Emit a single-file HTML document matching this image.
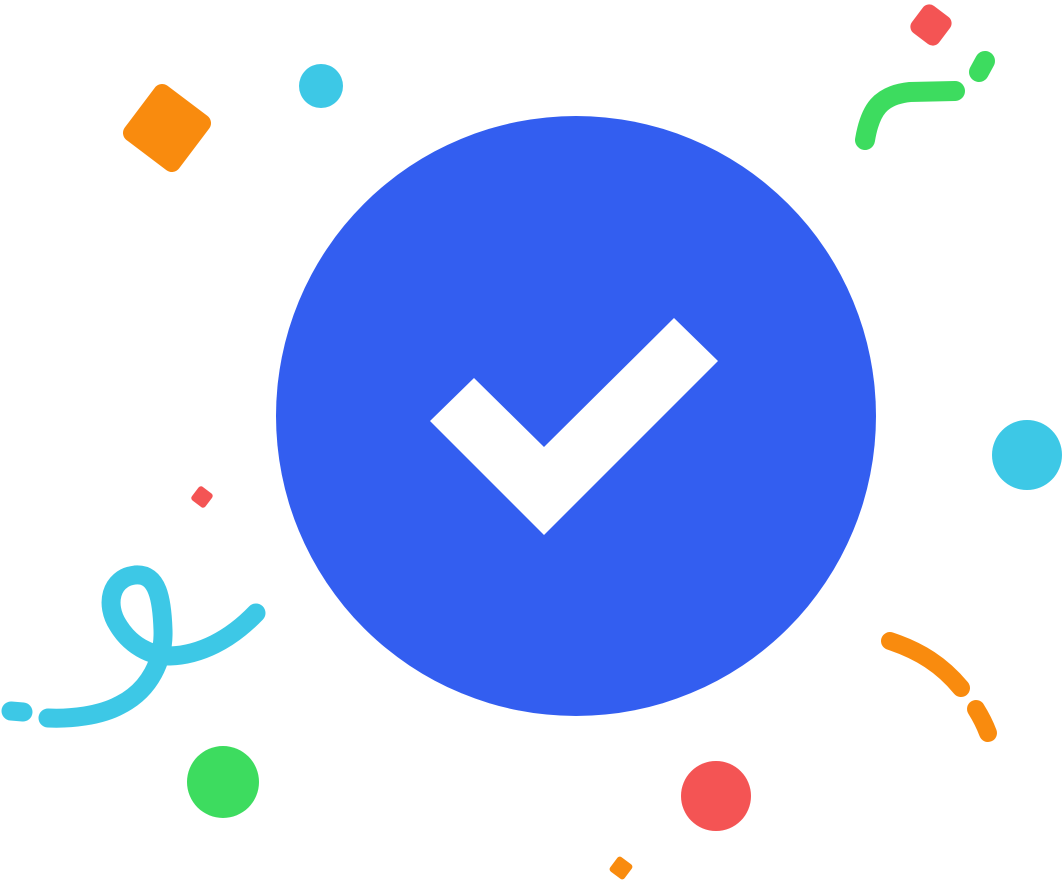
<!DOCTYPE html>
<html><head><meta charset="utf-8"><style>html,body{margin:0;padding:0;background:#fff}svg{display:block}</style></head>
<body>
<svg width="1063" height="883" viewBox="0 0 1063 883" xmlns="http://www.w3.org/2000/svg">
<circle cx="576" cy="416" r="300" fill="#335EF0"/>
<polygon points="430,421 474,378 544,447 674,318 718,361 544,535" fill="#fff"/>
<rect x="133" y="94" width="68" height="68" rx="9" fill="#F98B0E" transform="rotate(37 167 128)"/>
<circle cx="321" cy="86" r="22" fill="#3DC8E6"/>
<rect x="914" y="8" width="34" height="34" rx="8" fill="#F45454" transform="rotate(37 931 25)"/>
<path d="M865,140 C870,110 880,95 910,92 L955,91" stroke="#3DDC5F" stroke-width="20" fill="none" stroke-linecap="round"/>
<path d="M979,72 L985,61" stroke="#3DDC5F" stroke-width="20" fill="none" stroke-linecap="round"/>
<circle cx="1027" cy="455" r="35" fill="#3DC8E6"/>
<path d="M890,641 C920,651 942,665 961,688" stroke="#F98B0E" stroke-width="18" fill="none" stroke-linecap="round"/>
<path d="M976,709 C981,717 985,725 988,733" stroke="#F98B0E" stroke-width="18" fill="none" stroke-linecap="round"/>
<circle cx="716" cy="796" r="35" fill="#F45454"/>
<rect x="612" y="859" width="18" height="18" rx="3" fill="#F98B0E" transform="rotate(37 621 868)"/>
<circle cx="223" cy="782" r="36" fill="#3DDC5F"/>
<rect x="193.5" y="488.5" width="17" height="17" rx="3" fill="#F45454" transform="rotate(37 202 497)"/>
<path d="M256,613 C230,640 200,655 170,656 C150,656 130,645 118,625 C105,605 110,578 135,575 C158,573 162,600 163,630 C164,660 150,690 120,705 C100,716 70,719 48,718" stroke="#3DC8E6" stroke-width="19" fill="none" stroke-linecap="round"/>
<path d="M11,711 L23,712" stroke="#3DC8E6" stroke-width="19" fill="none" stroke-linecap="round"/>
</svg>
</body></html>
